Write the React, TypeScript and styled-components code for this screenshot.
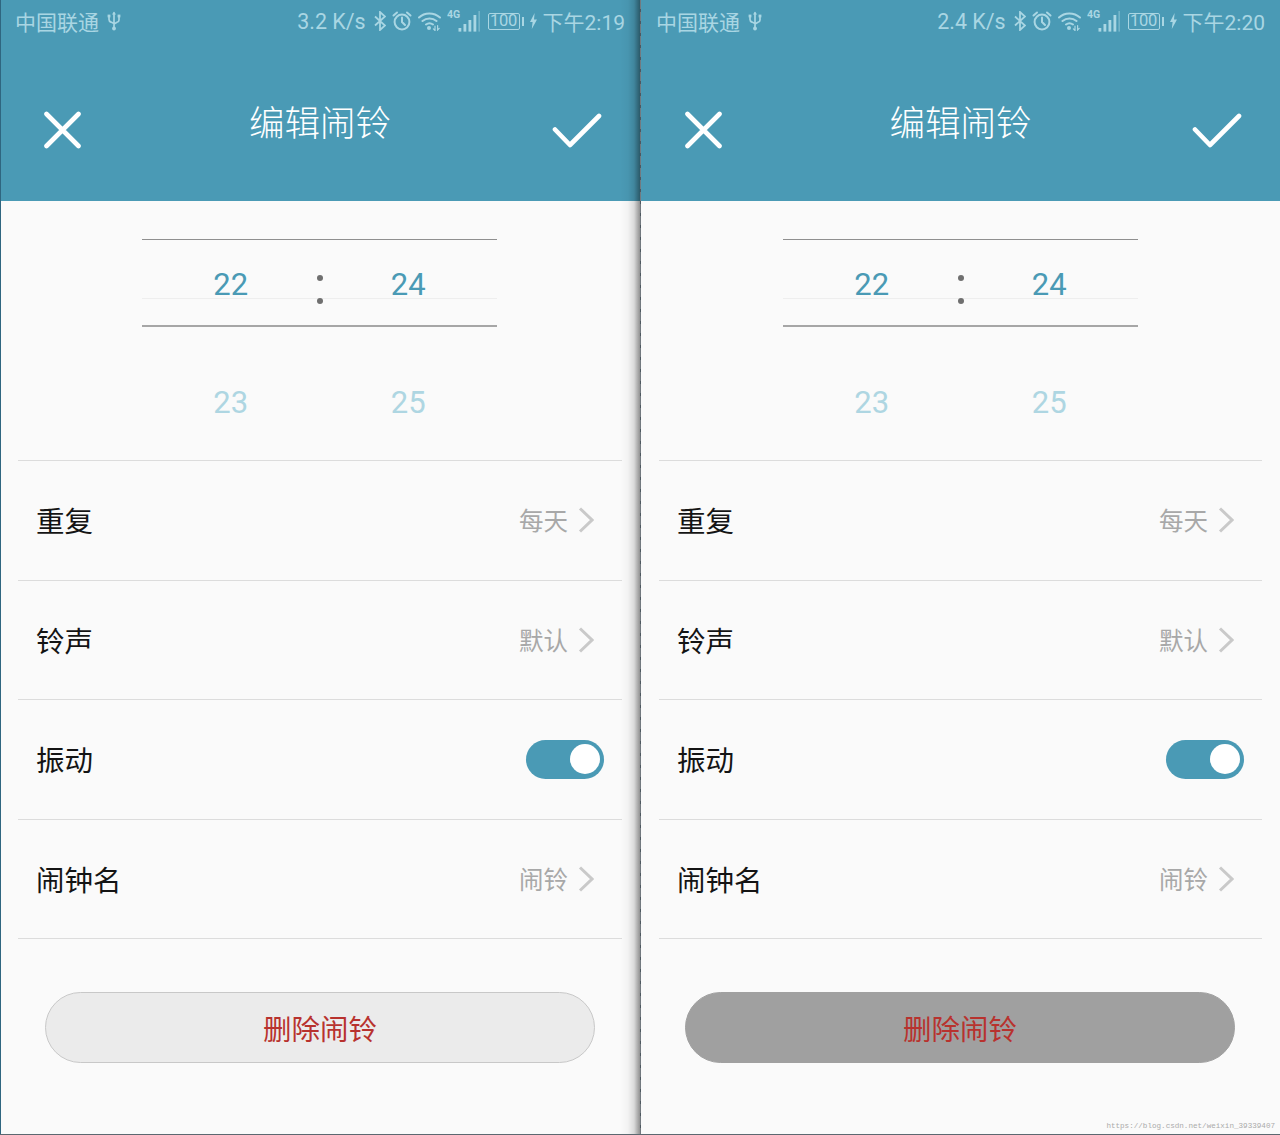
import React from "react";
import styled, { createGlobalStyle } from "styled-components";

const CJK = `"Noto Sans CJK SC", "Noto Sans", sans-serif`;
const TEAL = "#4a9ab5";

const Global = createGlobalStyle`
  html, body { margin: 0; padding: 0; background: #fafafa; }
  #root { width: 1280px; height: 1135px; overflow: hidden; }
`;

const Page = styled.div`
  display: flex;
  width: 1280px;
  height: 1135px;
  overflow: hidden;
  position: relative;
  &::after {
    content: "";
    position: absolute;
    left: 0;
    right: 0;
    bottom: 0;
    height: 1px;
    background: #5b6870;
  }
`;

const Phone = styled.section<{ $w: number; $shade?: boolean }>`
  position: relative;
  flex: 0 0 ${(p) => p.$w}px;
  width: ${(p) => p.$w}px;
  height: 1135px;
  background: #fafafa;
  display: flex;
  flex-direction: column;
  ${(p) =>
    p.$shade
      ? `
    &::before {
      content: "";
      position: absolute;
      top: 0;
      left: 0;
      bottom: 0;
      width: 1px;
      background: #2f6680;
    }
    &::after {
      content: "";
      position: absolute;
      top: 0;
      right: 0;
      bottom: 0;
      width: 20px;
      pointer-events: none;
      background: linear-gradient(90deg, rgba(0,0,0,0) 0%, rgba(0,0,0,.03) 40%, rgba(0,0,0,.13) 70%, rgba(0,0,0,.42) 100%);
    }`
      : ""}
`;

const Divider = styled.div`
  flex: 0 0 1px;
  height: 1135px;
  background: repeating-linear-gradient(180deg, #737a80 0 9px, #4d5860 9px 12px);
`;

const Header = styled.header`
  height: 201px;
  background: ${TEAL};
  display: flex;
  flex-direction: column;
  flex: none;
`;

const StatusBar = styled.div`
  height: 42px;
  display: flex;
  align-items: center;
  justify-content: space-between;
  padding: 0 15px;
  color: #a9d6e3;
  font-family: ${CJK};
  font-size: 21px;
  box-sizing: border-box;
`;

const StatusGroup = styled.div`
  display: flex;
  align-items: center;
  gap: 6px;
`;

const Carrier = styled.span`
  font-size: 21px;
  line-height: 42px;
  margin-right: 2px;
`;

const Speed = styled.span`
  font-family: Roboto, sans-serif;
  font-size: 21.4px;
  white-space: nowrap;
  margin-right: 2px;
`;

const Clock = styled.span`
  font-family: Roboto, ${CJK};
  font-size: 21px;
  white-space: nowrap;
  margin-top: -1px;
`;

const BatteryBox = styled.span`
  display: flex;
  align-items: center;
  justify-content: center;
  width: 32px;
  height: 17px;
  box-sizing: border-box;
  border: 1px solid #a9d6e3;
  border-radius: 2px;
  font-family: Roboto, sans-serif;
  font-size: 16.5px;
  line-height: 1;
  letter-spacing: -0.2px;
`;

const BatteryWrap = styled.span`
  display: flex;
  align-items: center;
  gap: 2px;
  margin-left: 2px;
`;

const BatteryNub = styled.span`
  width: 2px;
  height: 9px;
  background: #a9d6e3;
`;

const TitleBar = styled.div`
  display: flex;
  justify-content: space-between;
  align-items: flex-start;
  padding: 69px 38px 0 43px;
`;

const Title = styled.h1`
  margin: -13px 0 0 7px;
  color: #fff;
  font-family: ${CJK};
  font-weight: 300;
  font-size: 35.5px;
  line-height: 46px;
`;

const Picker = styled.div`
  height: 259px;
  flex: none;
  box-sizing: border-box;
  padding: 38px 0 0 142px;
  display: flex;
  flex-direction: column;
  align-items: flex-start;
`;

const Band = styled.div`
  position: relative;
  width: 355px;
  height: 88px;
  box-sizing: border-box;
  border-top: 1px solid #8f8f8f;
  border-bottom: 2px solid #a6a6a6;
  display: grid;
  grid-template-columns: 1fr 1fr;
  &::after {
    content: "";
    position: absolute;
    left: 0;
    right: 0;
    top: 58px;
    height: 1px;
    background: #eeeeee;
  }
`;

const Num = styled.div<{ $faded?: boolean }>`
  text-align: center;
  font-family: Roboto, sans-serif;
  font-size: 31px;
  line-height: 36px;
  color: ${(p) => (p.$faded ? "#aed6e2" : "#4a9ab5")};
`;

const Current = styled(Num)`
  padding-top: 27px;
`;

const Colon = styled.div`
  position: absolute;
  left: 50%;
  top: 35px;
  margin-left: -3px;
  display: flex;
  flex-direction: column;
  gap: 17px;
  z-index: 1;
`;

const Dot = styled.span`
  width: 6px;
  height: 6px;
  border-radius: 50%;
  background: #6f6f6f;
`;

const NextRow = styled.div`
  width: 355px;
  display: grid;
  grid-template-columns: 1fr 1fr;
  padding-top: 58px;
`;

const List = styled.div`
  margin: 0 18px;
  border-top: 1px solid #dcdcdc;
  flex: none;
`;

const Row = styled.div`
  height: 119.5px;
  box-sizing: border-box;
  border-bottom: 1px solid #dcdcdc;
  display: flex;
  align-items: center;
  justify-content: space-between;
  padding: 0 18px;
`;

const Label = styled.span`
  font-family: ${CJK};
  font-size: 28.5px;
  color: #141414;
  margin-top: -1px;
`;

const ValueWrap = styled.span`
  display: flex;
  align-items: center;
  gap: 10px;
  padding-right: 10px;
`;

const Value = styled.span`
  font-family: ${CJK};
  font-size: 24.5px;
  color: #a8a8a8;
  margin-top: -1px;
`;

const Switch = styled.span`
  width: 78px;
  height: 39px;
  border-radius: 20px;
  background: ${TEAL};
  display: flex;
  align-items: center;
  justify-content: flex-end;
  padding-right: 4px;
  box-sizing: border-box;
`;

const Knob = styled.span`
  width: 30px;
  height: 30px;
  border-radius: 50%;
  background: #fff;
`;

const Footer = styled.div`
  padding-top: 53px;
`;

const DeleteBtn = styled.button<{ $pressed?: boolean }>`
  display: block;
  width: 550px;
  margin-left: ${(p) => (p.$pressed ? 44 : 45)}px;
  height: 71px;
  border-radius: 36px;
  border: 1px solid ${(p) => (p.$pressed ? "#a0a0a0" : "#c8c8c8")};
  background: ${(p) => (p.$pressed ? "#a0a0a0" : "#ebebeb")};
  color: #b8322e;
  font-family: ${CJK};
  font-size: 28.5px;
  padding: 0;
`;

const Watermark = styled.div`
  position: absolute;
  right: 5px;
  bottom: 4px;
  font-family: "Liberation Mono", monospace;
  font-size: 7.6px;
  line-height: 10px;
  color: #aaaaaa;
`;

const StatusSvg = styled.svg`
  display: block;
  flex: none;
  fill: none;
  stroke: #a9d6e3;
`;

const Usb = () => (
  <StatusSvg width="14" height="20" viewBox="0 0 14 20" strokeWidth="1.7" strokeLinecap="round">
    <path d="M7 2v15M2 6v2.5c0 1.5 1 2.2 2 2.6L7 12.5M12 6v3c0 1.2-.8 2-2 2.3L7 13" />
    <path d="M7 0.5l2 3H5z" fill="#a9d6e3" stroke="none" />
    <rect x="0.6" y="3.6" width="2.8" height="2.8" fill="#a9d6e3" stroke="none" />
    <rect x="10.6" y="3.6" width="2.8" height="2.8" fill="#a9d6e3" stroke="none" />
    <circle cx="7" cy="17.5" r="1.9" fill="#a9d6e3" stroke="none" />
  </StatusSvg>
);

const Bluetooth = () => (
  <StatusSvg width="12" height="20" viewBox="0 0 12 20" strokeWidth="1.8">
    <path d="M1 5.5l10 9-5 4.5V1l5 4.5-10 9" />
  </StatusSvg>
);

const Alarm = () => (
  <StatusSvg width="20" height="20" viewBox="0 0 20 20" strokeWidth="2" strokeLinecap="round">
    <circle cx="10" cy="11" r="7.4" />
    <path d="M10 6.5V11l3 3M1.5 4.5L5 1.5M18.5 4.5L15 1.5" />
  </StatusSvg>
);

const Wifi = () => (
  <StatusSvg width="23" height="20" viewBox="0 0 23 20" strokeWidth="2" strokeLinecap="round">
    <path d="M1 6.5C6.5 1 16 1 22 6.5M4.5 10c4-3.5 10-3.5 14 0M8 13.5c2-1.5 5-1.5 7 0" />
    <circle cx="11" cy="17" r="2" fill="#a9d6e3" stroke="none" />
    <path d="M17 15v4.5l-1.6-1.6M19.6 14.5V19l1.6-1.6" strokeWidth="1.2" />
  </StatusSvg>
);

const Signal = () => (
  <StatusSvg width="33" height="24" viewBox="0 0 33 24" strokeWidth="0">
    <text x="0" y="9" fontFamily="Roboto, sans-serif" fontSize="10.5" fontWeight="700" fill="#a9d6e3">4G</text>
    <rect x="11.5" y="19" width="2.8" height="3.6" fill="#a9d6e3" />
    <rect x="16.5" y="15" width="2.8" height="7.6" fill="#a9d6e3" />
    <rect x="21.5" y="11" width="2.8" height="11.6" fill="#a9d6e3" />
    <rect x="26.5" y="6" width="2.8" height="16.6" fill="#a9d6e3" />
    <rect x="31.4" y="2" width="1.6" height="20.6" fill="#a9d6e3" opacity=".45" />
  </StatusSvg>
);

const Bolt = () => (
  <StatusSvg width="7" height="16" viewBox="0 0 7 16" strokeWidth="0">
    <path d="M4.6 0L0 9h2.6L1.8 16 7 6.4H4z" fill="#a9d6e3" />
  </StatusSvg>
);

const HeaderIcon = styled.svg`
  display: block;
  fill: none;
  stroke: #fff;
  stroke-width: 4.6;
  stroke-linecap: round;
  stroke-linejoin: round;
  flex: none;
`;

const CloseIcon = () => (
  <HeaderIcon width="38" height="38" viewBox="0 0 38 38">
    <path d="M3.5 3l32 32M35.5 3L3.5 35" />
  </HeaderIcon>
);

const CheckIcon = () => (
  <HeaderIcon width="50" height="38" viewBox="0 0 50 38">
    <path d="M3 18.5L18 34L47 5" />
  </HeaderIcon>
);

const ChevronSvg = styled.svg`
  display: block;
  fill: none;
  stroke: #c9c9c9;
  stroke-width: 3;
  flex: none;
`;

const Chevron = () => (
  <ChevronSvg width="16" height="26" viewBox="0 0 16 26">
    <path d="M2 1.5L14 13L2 24.5" />
  </ChevronSvg>
);

type ScreenProps = { speed: string; time: string; pressed?: boolean; width: number; shade?: boolean; mark?: boolean };

const Screen = ({ speed, time, pressed, width, shade, mark }: ScreenProps) => (
  <Phone $w={width} $shade={shade}>
    <Header>
      <StatusBar>
        <StatusGroup>
          <Carrier>中国联通</Carrier>
          <Usb />
        </StatusGroup>
        <StatusGroup>
          <Speed>{speed}</Speed>
          <Bluetooth />
          <Alarm />
          <Wifi />
          <Signal />
          <BatteryWrap>
            <BatteryBox>100</BatteryBox>
            <BatteryNub />
          </BatteryWrap>
          <Bolt />
          <Clock>{time}</Clock>
        </StatusGroup>
      </StatusBar>
      <TitleBar>
        <CloseIcon />
        <Title>编辑闹铃</Title>
        <CheckIcon />
      </TitleBar>
    </Header>
    <Picker>
      <Band>
        <Current>22</Current>
        <Current>24</Current>
        <Colon>
          <Dot />
          <Dot />
        </Colon>
      </Band>
      <NextRow>
        <Num $faded>23</Num>
        <Num $faded>25</Num>
      </NextRow>
    </Picker>
    <List>
      <Row>
        <Label>重复</Label>
        <ValueWrap>
          <Value>每天</Value>
          <Chevron />
        </ValueWrap>
      </Row>
      <Row>
        <Label>铃声</Label>
        <ValueWrap>
          <Value>默认</Value>
          <Chevron />
        </ValueWrap>
      </Row>
      <Row>
        <Label>振动</Label>
        <Switch>
          <Knob />
        </Switch>
      </Row>
      <Row>
        <Label>闹钟名</Label>
        <ValueWrap>
          <Value>闹铃</Value>
          <Chevron />
        </ValueWrap>
      </Row>
    </List>
    <Footer>
      <DeleteBtn $pressed={pressed}>删除闹铃</DeleteBtn>
    </Footer>
    {mark && <Watermark>https://blog.csdn.net/weixin_39339407</Watermark>}
  </Phone>
);

export default function App() {
  return (
    <Page>
      <Global />
      <Screen width={640} shade speed="3.2 K/s" time="下午2:19" />
      <Divider />
      <Screen width={639} speed="2.4 K/s" time="下午2:20" pressed mark />
    </Page>
  );
}
